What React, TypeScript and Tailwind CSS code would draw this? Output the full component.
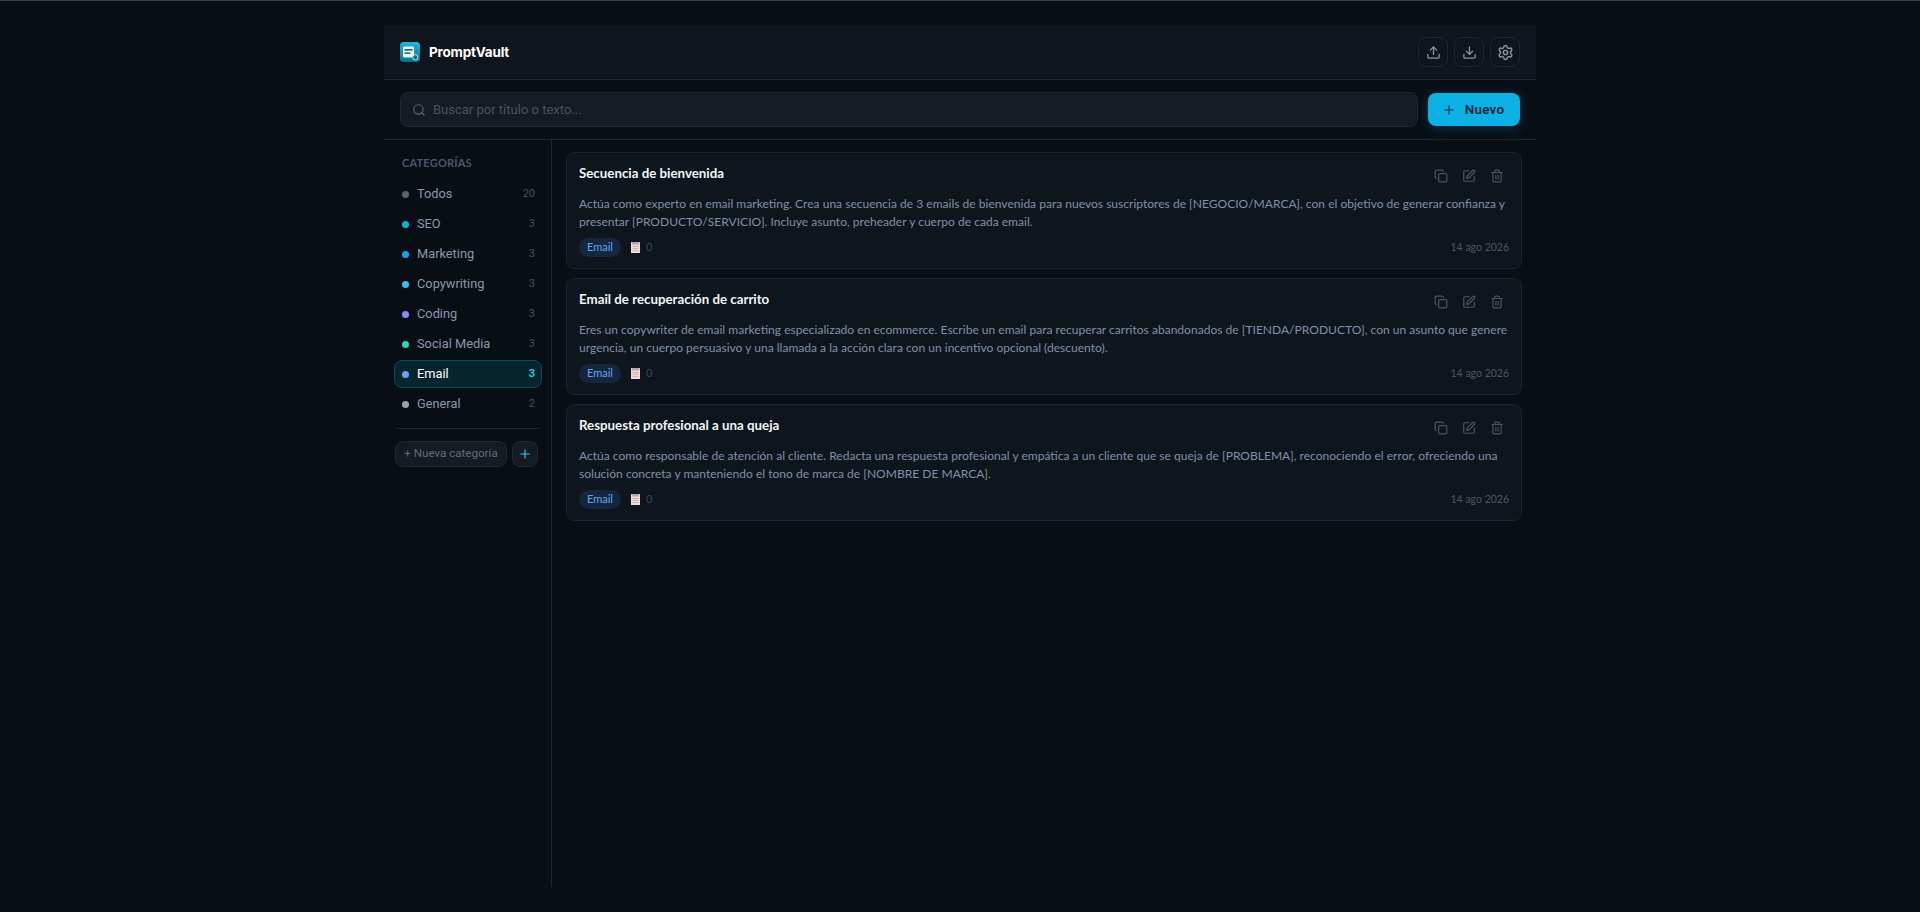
import { Copy, Download, Plus, Search, Settings, SquarePen, Trash2, Upload } from 'lucide-react';

const categories = [
  { name: 'Todos', count: 20, dot: 'bg-[#5b6270]' },
  { name: 'SEO', count: 3, dot: 'bg-[#06b6d4]' },
  { name: 'Marketing', count: 3, dot: 'bg-[#0ea5e9]' },
  { name: 'Copywriting', count: 3, dot: 'bg-[#38bdf8]' },
  { name: 'Coding', count: 3, dot: 'bg-[#818cf8]' },
  { name: 'Social Media', count: 3, dot: 'bg-[#2dd4bf]' },
  { name: 'Email', count: 3, dot: 'bg-[#60a5fa]', active: true },
  { name: 'General', count: 2, dot: 'bg-[#9ca3af]' },
];

const prompts = [
  {
    title: 'Secuencia de bienvenida',
    body: 'Actúa como experto en email marketing. Crea una secuencia de 3 emails de bienvenida para nuevos suscriptores de [NEGOCIO/MARCA], con el objetivo de generar confianza y presentar [PRODUCTO/SERVICIO]. Incluye asunto, preheader y cuerpo de cada email.',
  },
  {
    title: 'Email de recuperación de carrito',
    body: 'Eres un copywriter de email marketing especializado en ecommerce. Escribe un email para recuperar carritos abandonados de [TIENDA/PRODUCTO], con un asunto que genere urgencia, un cuerpo persuasivo y una llamada a la acción clara con un incentivo opcional (descuento).',
  },
  {
    title: 'Respuesta profesional a una queja',
    body: 'Actúa como responsable de atención al cliente. Redacta una respuesta profesional y empática a un cliente que se queja de [PROBLEMA], reconociendo el error, ofreciendo una solución concreta y manteniendo el tono de marca de [NOMBRE DE MARCA].',
  },
];

function Logo() {
  return (
    <svg width="20" height="20" viewBox="0 0 20 20" className="shrink-0">
      <defs>
        <linearGradient id="logo" x1="0" y1="0" x2="0" y2="1">
          <stop offset="0" stopColor="#22b8d8" />
          <stop offset="1" stopColor="#0e6f8c" />
        </linearGradient>
      </defs>
      <rect width="20" height="20" rx="3.5" fill="url(#logo)" />
      <rect x="3" y="4.5" width="11" height="11" rx="1.5" fill="#e6f4f8" />
      <rect x="4.5" y="7" width="8" height="1.6" fill="#14607a" />
      <rect x="4.5" y="10.5" width="6" height="1.4" fill="#14607a" />
      <circle cx="15.3" cy="15.3" r="2.6" fill="#0e6f8c" stroke="#bfe6f0" strokeWidth="1" />
    </svg>
  );
}

// the clipboard emoji as it looks in the reference
function UsesIcon() {
  return (
    <svg width="9" height="11" viewBox="0 0 9 11" className="shrink-0">
      <rect width="9" height="11" rx="0.5" fill="#eadfe0" />
      <rect x="1" y="0" width="7" height="2.5" fill="#b7a6a8" />
      <rect x="1.5" y="4" width="6" height="1" fill="#d9a9a0" />
      <rect x="1.5" y="6" width="6" height="1" fill="#dcb0a4" />
      <rect x="1.5" y="8" width="6" height="1" fill="#e0b08f" />
    </svg>
  );
}

function IconButton({ children }: { children: React.ReactNode }) {
  return (
    <button className="w-[30px] h-[30px] flex items-center justify-center rounded-lg border border-[#1f252e] text-[#8b95a3]">
      {children}
    </button>
  );
}

function PromptCard({ title, body }: { title: string; body: string }) {
  return (
    <div className="h-[117px] rounded-lg border border-[#1c232c] bg-[#0f151d] px-[12px] pt-[11px]">
      <div className="flex justify-between h-[18px]">
        <h3 className="text-[13.3px] leading-[18px] font-bold text-[#f3f5f7]">{title}</h3>
        <div className="flex gap-[14px] mt-[5px] mr-[5px] text-[#4d5561]">
          <Copy size={14} />
          <SquarePen size={14} />
          <Trash2 size={14} />
        </div>
      </div>
      <p className="mt-[13px] text-[12.05px] leading-[18.4px] text-[#8090a8]">{body}</p>
      <div className="flex items-center justify-between mt-[6px]">
        <div className="flex items-center">
          <span className="h-[19px] px-[8px] flex items-center rounded-full bg-[#16263d] text-[11px] text-[#60a5fa]">
            Email
          </span>
          <span className="ml-[10px]">
            <UsesIcon />
          </span>
          <span className="ml-[6px] text-[11px] text-[#3f4753]">0</span>
        </div>
        <span className="pt-[1px] text-[10.5px] text-[#4d5663]">14 ago 2026</span>
      </div>
    </div>
  );
}

export default function App() {
  return (
    <div className="min-h-[912px] bg-[#090e15] border-t border-[#3a3f45] pt-[24px] font-['Lato','Open_Sans',sans-serif]">
      <div className="w-[1152px] mx-auto h-[862px] flex flex-col">
        <header className="h-[55px] shrink-0 flex items-center justify-between pl-[16px] pr-[16px] bg-[#0f151d] border-b border-[#1f252e]">
          <div className="flex items-center gap-[9px]">
            <Logo />
            <span className="text-[13.5px] font-bold text-white font-['Inter',sans-serif] tracking-[-0.2px]">PromptVault</span>
          </div>
          <div className="flex gap-[6px]">
            <IconButton>
              <Upload size={15} />
            </IconButton>
            <IconButton>
              <Download size={15} />
            </IconButton>
            <IconButton>
              <Settings size={17} />
            </IconButton>
          </div>
        </header>

        <div className="h-[60px] shrink-0 flex items-center gap-[10px] px-[16px] border-b border-[#1f252e]">
          <div className="flex-1 h-[35px] flex items-center gap-[7px] px-[11px] rounded-lg border border-[#20272f] bg-[#141b24]">
            <Search size={14} className="text-[#5b6572]" />
            <span className="text-[13px] text-[#4a535f] font-['Roboto',sans-serif]">Buscar por título o texto...</span>
          </div>
          <button className="w-[92px] h-[33px] pr-[2px] flex items-center justify-center gap-[9px] rounded-lg bg-[#0eb1e6] shadow-[0_2px_12px_rgba(14,177,230,0.25)] text-[13.5px] font-semibold tracking-[0.2px] text-[#06283f] font-['Roboto',sans-serif]">
            <Plus size={14} />
            Nuevo
          </button>
        </div>

        <div className="flex flex-1 min-h-0">
          <aside className="w-[168px] shrink-0 border-r border-[#1f252e] pl-[10px] pr-[9px]">
            <div className="pl-[8px] pt-[16px] text-[11px] leading-[14px] font-bold text-[#4d5866] tracking-[0.2px]">
              CATEGORÍAS
            </div>
            <nav className="mt-[10px] flex flex-col gap-[2px] font-['Roboto',sans-serif]">
              {categories.map((c) => (
                <div
                  key={c.name}
                  className={
                    c.active
                      ? 'h-[28px] flex items-center pl-[7px] pr-[6px] rounded-lg border border-[#0e4a58] bg-[#07252e]'
                      : 'h-[28px] flex items-center pl-[7px] pr-[6px] rounded-lg border border-transparent'
                  }
                >
                  <span className={`w-[7px] h-[7px] rounded-full ${c.dot}`} />
                  <span className={c.active ? 'ml-[8px] flex-1 text-[12.8px] text-white' : 'ml-[8px] flex-1 text-[12.8px] text-[#8a97ab]'}>
                    {c.name}
                  </span>
                  <span className={c.active ? 'text-[11px] font-semibold text-[#22d3ee]' : 'text-[11px] text-[#465060]'}>
                    {c.count}
                  </span>
                </div>
              ))}
            </nav>
            <div className="mt-[10px] mx-[3px] border-t border-[#1f252e]" />
            <div className="mt-[12px] flex gap-[5px] pl-[1px] font-['Roboto',sans-serif]">
              <div className="w-[112px] h-[26px] flex items-center justify-center rounded-lg border border-[#20272f] bg-[#151b22] text-[11.6px] text-[#606b7a]">
                + Nueva categoría
              </div>
              <div className="w-[26px] h-[26px] flex items-center justify-center rounded-lg border border-[#20272f] bg-[#151b22] text-[#22d3ee]">
                <Plus size={14} />
              </div>
            </div>
          </aside>

          <main className="flex-1 pt-[12px] pl-[14px] pr-[14px] flex flex-col gap-[9px]">
            {prompts.map((p) => (
              <PromptCard key={p.title} title={p.title} body={p.body} />
            ))}
          </main>
        </div>
      </div>
    </div>
  );
}
